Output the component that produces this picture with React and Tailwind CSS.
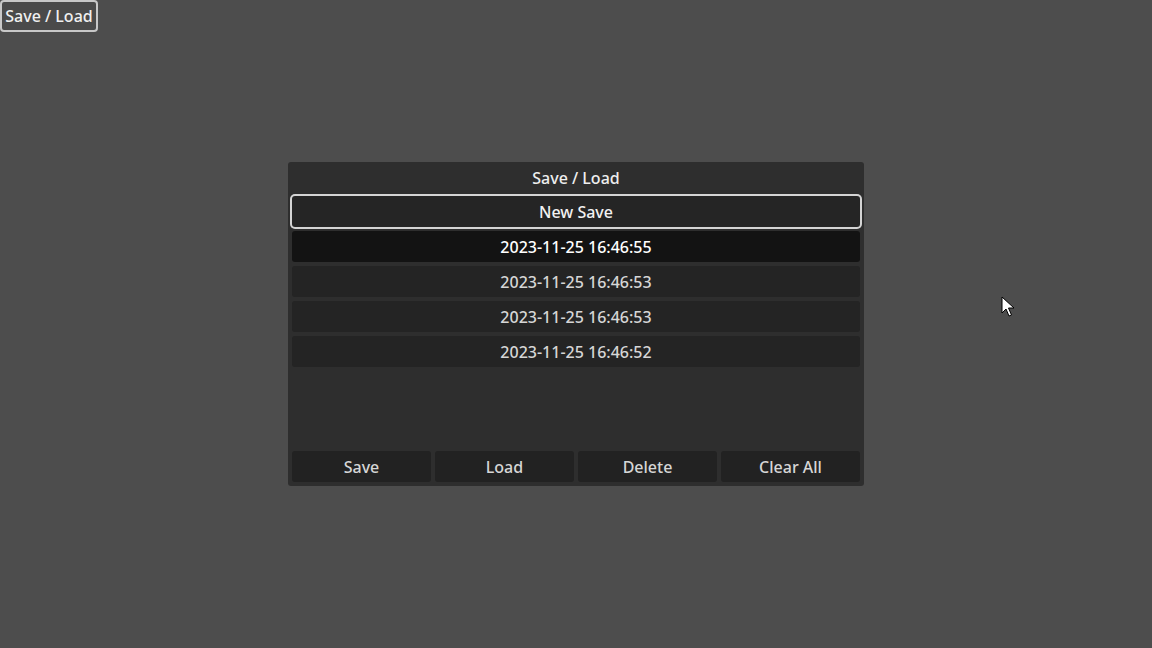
import React, { useState } from "react";

const saves = [
    "2023-11-25 16:46:55",
    "2023-11-25 16:46:53",
    "2023-11-25 16:46:53",
    "2023-11-25 16:46:52",
];

const actions = ["Save", "Load", "Delete", "Clear All"];

export default function App() {
    const [selected, setSelected] = useState(0);

    return (
        <div
            className="relative w-[1152px] h-[648px] bg-[#4d4d4d] overflow-hidden font-medium"
            style={{ fontFamily: '"Noto Sans", "Open Sans", sans-serif' }}
        >
            {/* Toggle button */}
            <button className="absolute left-0 top-0 h-[32px] w-[98px] border-2 border-[#c8c8c8] rounded-[4px] bg-[#4a4a4a] text-[16px] text-[#f0f0f0] leading-none flex items-center justify-center">
                Save / Load
            </button>

            <div className="flex items-center justify-center h-full">
                {/* Panel */}
                <div className="w-[576px] h-[324px] bg-[#2e2e2e] rounded-[3px] px-1 pb-1 flex flex-col gap-1">
                    <div className="h-[30px] pt-[2px] flex items-center justify-center text-[16px] text-[#eeeeee]">
                        Save / Load
                    </div>

                    <button className="h-[31px] shrink-0 rounded-[3px] bg-[#252525] ring-2 ring-[#d4d4d4] text-[16px] text-[#f2f2f2] flex items-center justify-center">
                        New Save
                    </button>

                    {saves.map((s, idx) => (
                        <button
                            key={idx}
                            onClick={() => setSelected(idx)}
                            className={
                                idx === selected
                                    ? "h-[31px] shrink-0 rounded-[3px] bg-[#131313] text-[16px] text-[#ffffff] flex items-center justify-center"
                                    : "h-[31px] shrink-0 rounded-[3px] bg-[#242424] text-[16px] text-[#d6d6d6] flex items-center justify-center"
                            }
                        >
                            {s}
                        </button>
                    ))}

                    <div className="flex-1" />

                    <div className="grid grid-cols-4 gap-1">
                        {actions.map((a) => (
                            <button
                                key={a}
                                className="h-[31px] rounded-[3px] bg-[#222222] text-[16px] text-[#d6d6d6] flex items-center justify-center"
                            >
                                {a}
                            </button>
                        ))}
                    </div>
                </div>
            </div>

            {/* Mouse cursor */}
            <svg className="absolute left-[1001px] top-[296px]" width="14" height="22" viewBox="0 0 14 22">
                <path d="M1 1 L1 17 L5 13 L8 20 L10.5 19 L7.5 12 L13 12 Z" fill="#ffffff" stroke="#000000" strokeWidth="1" strokeLinejoin="miter" />
            </svg>
        </div>
    );
}
